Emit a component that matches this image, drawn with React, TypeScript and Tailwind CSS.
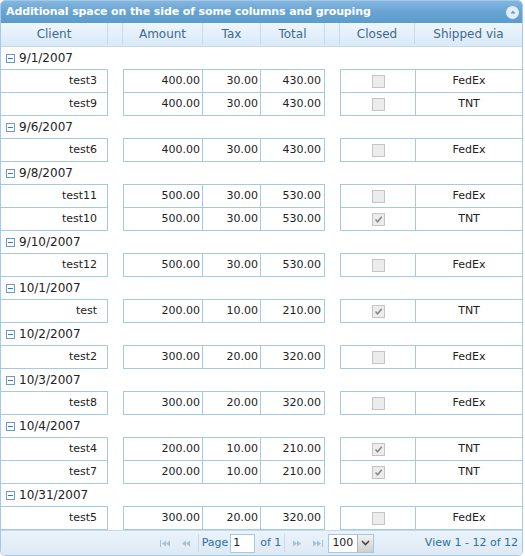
import React from "react";

type Row = {
  client: string;
  amount: number;
  tax: number;
  total: number;
  closed: boolean;
  ship: string;
};

type Group = { date: string; rows: Row[] };

const r = (
  client: string,
  amount: number,
  tax: number,
  total: number,
  closed: boolean,
  ship: string
): Row => ({ client, amount, tax, total, closed, ship });

const groups: Group[] = [
  { date: "9/1/2007", rows: [r("test3", 400, 30, 430, false, "FedEx"), r("test9", 400, 30, 430, false, "TNT")] },
  { date: "9/6/2007", rows: [r("test6", 400, 30, 430, false, "FedEx")] },
  { date: "9/8/2007", rows: [r("test11", 500, 30, 530, false, "FedEx"), r("test10", 500, 30, 530, true, "TNT")] },
  { date: "9/10/2007", rows: [r("test12", 500, 30, 530, false, "FedEx")] },
  { date: "10/1/2007", rows: [r("test", 200, 10, 210, true, "TNT")] },
  { date: "10/2/2007", rows: [r("test2", 300, 20, 320, false, "FedEx")] },
  { date: "10/3/2007", rows: [r("test8", 300, 20, 320, false, "FedEx")] },
  { date: "10/4/2007", rows: [r("test4", 200, 10, 210, true, "TNT"), r("test7", 200, 10, 210, true, "TNT")] },
  { date: "10/31/2007", rows: [r("test5", 300, 20, 320, false, "FedEx")] },
];

const money = (n: number) => n.toFixed(2);

const CheckBox = ({ checked }: { checked: boolean }) => (
  <span className="inline-flex h-[13px] w-[13px] items-center justify-center border border-[#c4c4c4] bg-[#ececec]">
    {checked && (
      <svg width="9" height="9" viewBox="0 0 9 9">
        <path d="M1.5 4.5 L3.6 6.8 L7.8 1.8" fill="none" stroke="#8a8a8a" strokeWidth="1.6" />
      </svg>
    )}
  </span>
);

const MinusBox = () => (
  <svg width="9" height="9" viewBox="0 0 9 9" className="shrink-0">
    <rect x="0.5" y="0.5" width="8" height="8" fill="#fff" stroke="#6b9cc4" />
    <path d="M2 4.5 H7" stroke="#3d7ab0" strokeWidth="1" />
  </svg>
);

const Header = () => (
  <div className="flex h-[24px] border-b border-[#c5dbec] bg-gradient-to-b from-[#eef6fd] to-[#d9e9f8] pb-[2px] text-[12px] text-[#41698f]">
    <div className="flex w-[107px] items-center justify-center border-r border-[#c5dbec]">Client</div>
    <div className="w-[15px] border-r border-[#c5dbec]" />
    <div className="flex w-[80px] items-center justify-center border-r border-[#c5dbec]">Amount</div>
    <div className="flex w-[58px] items-center justify-center border-r border-[#c5dbec]">Tax</div>
    <div className="flex w-[64px] items-center justify-center border-r border-[#c5dbec]">Total</div>
    <div className="w-[15px] border-r border-[#c5dbec]" />
    <div className="flex w-[75px] items-center justify-center border-r border-[#c5dbec]">Closed</div>
    <div className="flex flex-1 items-center justify-center">Shipped via</div>
  </div>
);

const DataRow = ({ row, first }: { row: Row; first: boolean }) => {
  const cell = first ? "border-t border-b" : "border-b";
  return (
    <div className={`flex text-[11px] text-[#222] ${first ? "h-[24px]" : "h-[23px]"}`}>
      <div className={`flex w-[107px] items-center justify-end border-r border-[#a6c9e2] pr-[10px] ${cell}`}>{row.client}</div>
      <div className="w-[15px]" />
      <div className={`flex w-[80px] items-center justify-end border-l border-r border-[#a6c9e2] pr-[2px] ${cell}`}>{money(row.amount)}</div>
      <div className={`flex w-[58px] items-center justify-end border-r border-[#a6c9e2] pr-[2px] ${cell}`}>{money(row.tax)}</div>
      <div className={`flex w-[64px] items-center justify-end border-r border-[#a6c9e2] pr-[3px] ${cell}`}>{money(row.total)}</div>
      <div className="w-[15px]" />
      <div className={`flex w-[76px] items-center justify-center border-l border-r border-[#a6c9e2] ${cell}`}>
        <CheckBox checked={row.closed} />
      </div>
      <div className={`flex flex-1 items-center justify-center border-[#a6c9e2] ${cell}`}>{row.ship}</div>
    </div>
  );
};

const Arrow = ({ dir, bar }: { dir: "l" | "r"; bar: boolean }) => (
  <svg width="12" height="9" viewBox="0 0 12 9" className="opacity-35">
    {dir === "l" ? (
      <g fill="#2e6e9e">
        {bar && <rect x="1" y="1" width="1" height="7" />}
        <path d="M3 4.5 L7 1.5 V7.5Z" />
        <path d="M7 4.5 L11 1.5 V7.5Z" />
      </g>
    ) : (
      <g fill="#2e6e9e">
        <path d="M1 1.5 L5 4.5 L1 7.5Z" />
        <path d="M5 1.5 L9 4.5 L5 7.5Z" />
        {bar && <rect x="10" y="1" width="1" height="7" />}
      </g>
    )}
  </svg>
);

const Pager = () => (
  <div className="relative flex h-[25px] items-center border-t border-[#c5dbec] bg-gradient-to-b from-[#eaf3fb] to-[#dde9f5] text-[11px] text-[#2e6e9e]">
    <div className="absolute left-0 right-0 flex justify-center pl-[6px]">
      <div className="flex items-center">
        <span className="px-[4px]"><Arrow dir="l" bar /></span>
        <span className="px-[4px]"><Arrow dir="l" bar={false} /></span>
        <span className="mx-[3px] h-[18px] w-px bg-[#c5dbec]" />
        <span>Page</span>
        <span className="ml-[2px] flex h-[19px] w-[25px] items-center border border-[#a6c9e2] bg-white pl-[2px] text-[#222]">1</span>
        <span className="ml-[5px]">of 1</span>
        <span className="mx-[3px] h-[18px] w-px bg-[#c5dbec]" />
        <span className="px-[4px]"><Arrow dir="r" bar={false} /></span>
        <span className="px-[4px]"><Arrow dir="r" bar /></span>
        <span className="flex h-[19px] w-[46px] items-center border border-[#a6c9e2] bg-white text-[#222]">
          <span className="flex-1 pl-[3px]">100</span>
          <span className="flex h-[17px] w-[16px] items-center justify-center border-l border-[#b5b5b5] bg-gradient-to-b from-[#f2f2f2] to-[#cfcfcf]">
            <svg width="9" height="6" viewBox="0 0 9 6">
              <path d="M1 1 L4.5 4.5 L8 1" fill="none" stroke="#444" strokeWidth="1.6" />
            </svg>
          </span>
        </span>
      </div>
    </div>
    <div className="ml-auto pr-[4px]">View 1 - 12 of 12</div>
  </div>
);

export default function App() {
  return (
    <div className="bg-white" style={{ fontFamily: '"DejaVu Sans", Verdana, sans-serif' }}>
      <div className="w-[523px] overflow-hidden rounded-[5px] border border-[#a6c9e2] bg-white">
        <div className="flex h-[22px] items-center justify-between bg-gradient-to-b from-[#84b6e0] via-[#67a3d3] to-[#5c9ccc] pl-[5px] pr-[3px] text-[11px] font-bold tracking-[-0.12px] text-white">
          <span>Additional space on the side of some columns and grouping</span>
          <span className="flex h-[13px] w-[13px] items-center justify-center rounded-full bg-[#e3edf7]">
            <svg width="8" height="8" viewBox="0 0 8 8">
              <path d="M1.5 5.5 L4 2.5 L6.5 5.5Z" fill="#5c9ccc" />
            </svg>
          </span>
        </div>
        <Header />
        {groups.map((g) => (
          <div key={g.date}>
            <div className="flex h-[22px] items-center gap-[4px] pl-[5px] text-[12px] text-[#222]">
              <MinusBox />
              <span>{g.date}</span>
            </div>
            {g.rows.map((row, i) => (
              <DataRow key={row.client} row={row} first={i === 0} />
            ))}
          </div>
        ))}
        <Pager />
      </div>
    </div>
  );
}
